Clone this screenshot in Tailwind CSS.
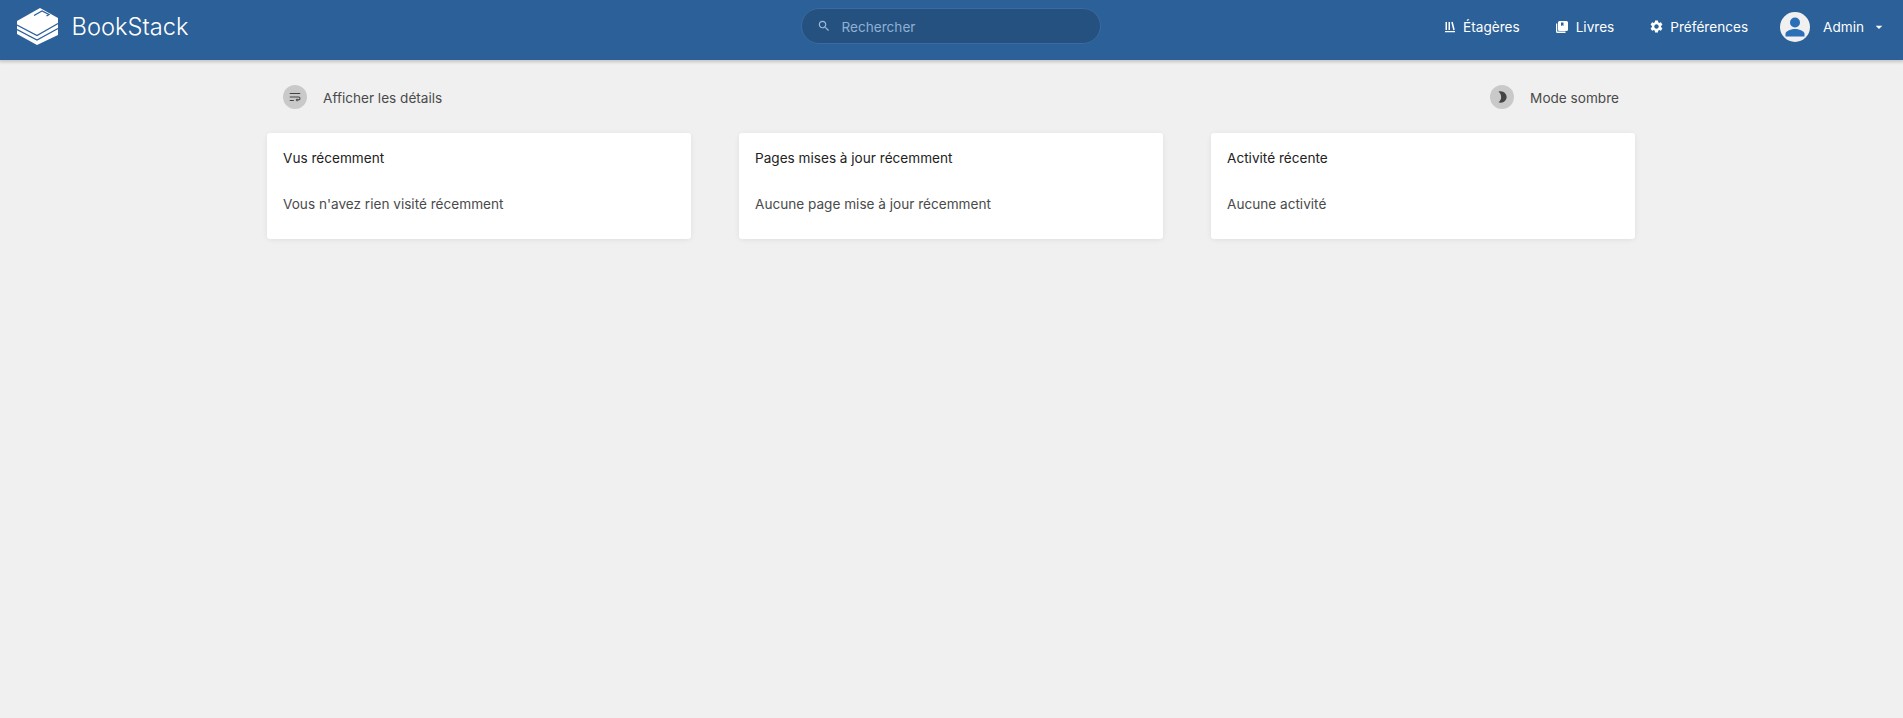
<!DOCTYPE html>
<html lang="fr">

<head>
  <meta charset="utf-8">
  <title>BookStack</title>
  <script src="https://cdn.jsdelivr.net/npm/@tailwindcss/browser@4"></script>
</head>

<body class="bg-[#f0f0f0] h-screen overflow-hidden font-['Inter',sans-serif] text-[#4a4a4a] text-[13.6px]">
<header class="h-[60px] bg-[#2b6098] text-white shadow-[0_1px_3px_1px_rgba(76,76,76,0.26)] grid grid-cols-[1fr_300px_1fr] items-center px-4 pb-2">
  <a href="#" class="flex items-center pt-[1px]">
    <svg class="w-[42px] h-[37px] mr-[13px] ml-[0.5px]" viewBox="0 0 42 37">
      <path d="M0 13 23 0 41 10V27L20 37 0 26Z" fill="#fff"/>
      <path d="M0 17 20 27.500 41 15.500M0 21.500 20 32 41 20.500" fill="none" stroke="#2b6098" stroke-width="1.300"/>
      <path d="M17 7.500 25 3l7 3.500-2.500 1.500" fill="none" stroke="#2b6098" stroke-width="1.300"/>
    </svg>
    <span class="text-[23.700px] font-light leading-none pt-[1px]">BookStack</span>
  </a>

  <div class="h-9 w-[300px] -ml-px bg-[#255180] border border-[#3a6ba0] rounded-full flex items-center pl-[15px] text-[#8fb0d2]">
    <svg class="w-[14px] h-[14px] mr-[11px]" viewBox="0 0 24 24" fill="#9dbad8">
      <path d="M15.500 14h-.79l-.28-.27C15.410 12.590 16 11.110 16 9.500 16 5.910 13.090 3 9.500 3S3 5.910 3 9.500 5.910 16 9.500 16c1.610 0 3.090-.59 4.230-1.570l.27.28v.79l5 4.990L20.490 19l-4.990-5zm-6 0C7.010 14 5 11.990 5 9.500S7.010 5 9.500 5 14 7.010 14 9.500 11.990 14 9.500 14z"/>
    </svg>
    <span class="pt-[2px]">Rechercher</span>
  </div>

  <nav class="flex items-center justify-end pt-[2px]">
    <a href="#" class="flex items-center mr-[36px]">
      <svg class="w-3 h-3 mr-[6px]" viewBox="0 0 24 24" fill="#fff">
        <path d="M1 2h3v16H1zM7 2h3v16H7zM12.500 2.500l3-.8 4 15.800-3 .8zM0 20h20v2.500H0z"/>
      </svg>
      Étagères
    </a>
    <a href="#" class="flex items-center mr-[35px]">
      <svg class="w-3 h-3 mr-2" viewBox="0 0 24 24" fill="#fff">
        <path d="M0 5h2.500v16H19v3H3a3 3 0 0 1-3-3z"/>
        <path fill-rule="evenodd" d="M7 0h14a3 3 0 0 1 3 3v14a3 3 0 0 1-3 3H7a3 3 0 0 1-3-3V3a3 3 0 0 1 3-3zm3 3v7l2.500-1.500L15 10V3z"/>
      </svg>
      Livres
    </a>
    <a href="#" class="flex items-center mr-[32px]">
      <svg class="w-[15px] h-[15px] mr-[6px]" viewBox="0 0 24 24" fill="#fff">
        <path d="M19.140 12.940c.04-.3.06-.61.06-.94 0-.32-.02-.64-.07-.94l2.030-1.580c.18-.14.23-.41.12-.61l-1.920-3.320c-.12-.22-.37-.29-.59-.22l-2.390.96c-.5-.38-1.030-.7-1.620-.94l-.36-2.540c-.04-.24-.24-.41-.48-.41h-3.840c-.24 0-.43.17-.47.41l-.36 2.540c-.59.24-1.130.57-1.620.94l-2.390-.96c-.22-.08-.47 0-.59.22L2.740 8.870c-.12.21-.08.47.12.61l2.030 1.580c-.05.3-.09.63-.09.94s.02.64.07.94l-2.030 1.580c-.18.14-.23.41-.12.61l1.920 3.320c.12.22.37.29.59.22l2.390-.96c.5.38 1.030.7 1.620.94l.36 2.540c.05.24.24.41.48.41h3.840c.24 0 .44-.17.47-.41l.36-2.540c.59-.24 1.130-.56 1.620-.94l2.390.96c.22.08.47 0 .59-.22l1.920-3.320c.12-.22.07-.47-.12-.61l-2.010-1.580zM12 15.600c-1.980 0-3.600-1.620-3.600-3.600s1.620-3.600 3.600-3.600 3.600 1.620 3.600 3.600-1.620 3.600-3.600 3.600z"/>
      </svg>
      Préférences
    </a>
    <a href="#" class="flex items-center">
      <span class="w-[30px] h-[30px] rounded-full bg-[#f0f0f0] flex items-center justify-center mr-[13px]">
        <svg class="w-[24px] h-[24px]" viewBox="0 0 24 24" fill="#2b6fb8">
          <circle cx="12" cy="7.500" r="5"/>
          <path d="M2.500 21.500v-2.800c0-3 6.300-4.700 9.500-4.700s9.500 1.700 9.500 4.700v2.800z"/>
        </svg>
      </span>
      Admin
      <svg class="w-4 h-4 ml-[7px]" viewBox="0 0 24 24" fill="#fff">
        <path d="M7 10l5 5 5-5z"/>
      </svg>
    </a>
  </nav>
</header>

<main class="w-[1368px] ml-[267px]">
  <div class="flex justify-between items-center h-[73px] px-4 pt-[1px]">
    <button class="flex items-center">
      <span class="w-6 h-6 rounded-full bg-[#c9c9c9] flex items-center justify-center mr-4">
        <svg class="w-[14px] h-[14px]" viewBox="0 0 24 24" fill="#444">
          <path d="M3 5h18v2H3zM3 11h15a3.500 3.500 0 0 1 0 7h-2v2l-3-3 3-3v2h2.200a1.500 1.500 0 0 0 0-3H3zM3 17h7v2H3z"/>
        </svg>
      </span>
      <span class="pt-[3px]">Afficher les détails</span>
    </button>
    <button class="flex items-center">
      <span class="w-6 h-6 rounded-full bg-[#c9c9c9] flex items-center justify-center mr-4">
        <svg class="w-[14px] h-[14px]" viewBox="0 0 24 24" fill="#444">
          <path d="M10 2a10 10 0 1 1 0 20c-1.500 0-3-.3-4-.8C9 19 10.500 16 10.500 12S9 5 6 2.800C7 2.300 8.500 2 10 2z"/>
        </svg>
      </span>
      <span class="pt-[3px]">Mode sombre</span>
    </button>
  </div>

  <div class="grid grid-cols-3 gap-12">
    <section class="bg-white rounded-[3px] shadow-[0_1px_6px_-1px_rgba(0,0,0,0.1)] h-[106px] px-4 pt-[15px]">
      <h3 class="text-[#222] leading-[20px] mb-[26px]">Vus récemment</h3>
      <p class="leading-[20px]">Vous n'avez rien visité récemment</p>
    </section>
    <section class="bg-white rounded-[3px] shadow-[0_1px_6px_-1px_rgba(0,0,0,0.1)] h-[106px] px-4 pt-[15px]">
      <h3 class="text-[#222] leading-[20px] mb-[26px]">Pages mises à jour récemment</h3>
      <p class="leading-[20px]">Aucune page mise à jour récemment</p>
    </section>
    <section class="bg-white rounded-[3px] shadow-[0_1px_6px_-1px_rgba(0,0,0,0.1)] h-[106px] px-4 pt-[15px]">
      <h3 class="text-[#222] leading-[20px] mb-[26px]">Activité récente</h3>
      <p class="leading-[20px]">Aucune activité</p>
    </section>
  </div>
</main>
</body>

</html>
